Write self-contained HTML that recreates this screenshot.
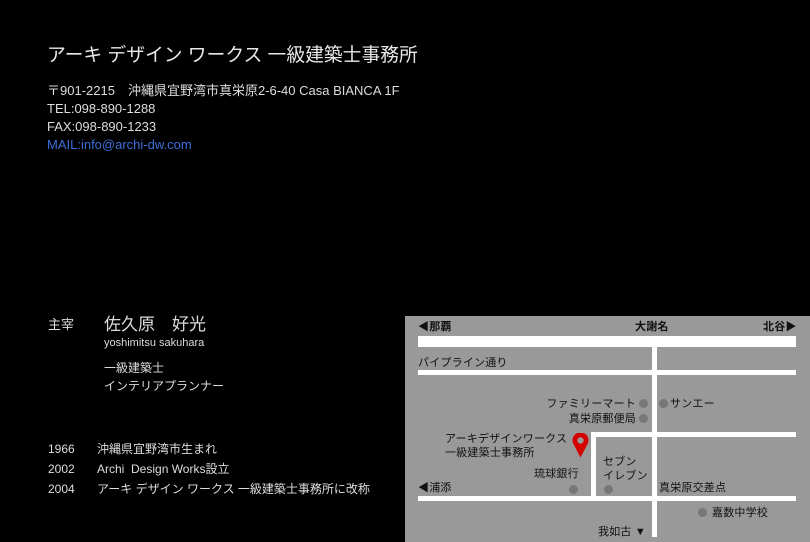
<!DOCTYPE html>
<html><head><meta charset="utf-8"><style>
*{margin:0;padding:0;box-sizing:border-box}
body{width:810px;height:542px;background:#000;overflow:hidden;position:relative;font-family:"Liberation Sans","Noto Sans CJK JP",sans-serif;color:#ddd}
.a{position:absolute;white-space:nowrap;line-height:1}
#map{position:absolute;left:405px;top:316px;width:405px;height:226px;background:#999}
#map .a{color:#111;font-size:11px;letter-spacing:0.2px;margin-top:2px}
.rt{text-align:right}
.r{position:absolute;background:#fff}
.d{position:absolute;width:9px;height:9px;border-radius:50%;background:#777}
</style></head><body>
<div class="a" style="left:47px;top:46px;font-size:18.8px;color:#e8e8e8">アーキ デザイン ワークス 一級建築士事務所</div>
<div class="a" style="left:47px;top:84px;font-size:13px">〒901-2215　沖縄県宜野湾市真栄原2-6-40 Casa BIANCA 1F</div>
<div class="a" style="left:47px;top:102px;font-size:13px">TEL:098-890-1288</div>
<div class="a" style="left:47px;top:120px;font-size:13px">FAX:098-890-1233</div>
<div class="a" style="left:47px;top:138px;font-size:13px;color:#3b6fd8">MAIL:info@archi-dw.com</div>

<div class="a" style="left:48px;top:318px;font-size:13px">主宰</div>
<div class="a" style="left:104px;top:316px;font-size:17px">佐久原　好光</div>
<div class="a" style="left:104px;top:338px;font-size:11px">yoshimitsu sakuhara</div>
<div class="a" style="left:104px;top:362px;font-size:12px">一級建築士</div>
<div class="a" style="left:104px;top:380px;font-size:12px">インテリアプランナー</div>
<div class="a" style="left:48px;top:443px;font-size:12px">1966</div>
<div class="a" style="left:97px;top:443px;font-size:12px">沖縄県宜野湾市生まれ</div>
<div class="a" style="left:48px;top:463px;font-size:12px">2002</div>
<div class="a" style="left:97px;top:463px;font-size:12px">Archi&nbsp; Design Works設立</div>
<div class="a" style="left:48px;top:483px;font-size:12px">2004</div>
<div class="a" style="left:97px;top:483px;font-size:12px">アーキ デザイン ワークス 一級建築士事務所に改称</div>

<div id="map">
<div class="r" style="left:13px;top:20px;width:378px;height:11px"></div>
<div class="r" style="left:13px;top:54px;width:378px;height:5px"></div>
<div class="r" style="left:247px;top:31px;width:5px;height:190px"></div>
<div class="r" style="left:186px;top:116px;width:205px;height:5px"></div>
<div class="r" style="left:186px;top:116px;width:5px;height:64px"></div>
<div class="r" style="left:13px;top:180px;width:378px;height:5px"></div>
<div class="a" style="left:13px;top:4px;font-weight:bold">◀那覇</div>
<div class="a" style="left:230px;top:4px;font-weight:bold">大謝名</div>
<div class="a" style="left:358px;top:4px;font-weight:bold">北谷▶</div>
<div class="a" style="left:13px;top:40px">パイプライン通り</div>
<div class="a rt" style="right:174px;top:81px">ファミリーマート</div>
<div class="d" style="left:234px;top:83px"></div>
<div class="d" style="left:254px;top:83px"></div>
<div class="a" style="left:265px;top:81px">サンエー</div>
<div class="a rt" style="right:174px;top:96px">真栄原郵便局</div>
<div class="d" style="left:234px;top:98px"></div>
<div class="a" style="left:40px;top:116px">アーキデザインワークス</div>
<div class="a" style="left:40px;top:130px">一級建築士事務所</div>
<svg style="position:absolute;left:167px;top:117px" width="17" height="25" viewBox="0 0 17 25"><path d="M8.5 24.5 L2 12 A8 8 0 1 1 15 12 Z" fill="#d40000"/><circle cx="8.5" cy="7.5" r="3.2" fill="#999"/></svg>
<div class="a" style="left:198px;top:139px">セブン</div>
<div class="a" style="left:198px;top:153px">イレブン</div>
<div class="a" style="left:129px;top:151px">琉球銀行</div>
<div class="d" style="left:164px;top:169px"></div>
<div class="d" style="left:199px;top:169px"></div>
<div class="a" style="left:13px;top:165px">◀浦添</div>
<div class="a" style="left:254px;top:165px">真栄原交差点</div>
<div class="d" style="left:293px;top:192px"></div>
<div class="a" style="left:307px;top:190px">嘉数中学校</div>
<div class="a" style="left:193px;top:209px">我如古 ▼</div>
</div>
</body></html>
